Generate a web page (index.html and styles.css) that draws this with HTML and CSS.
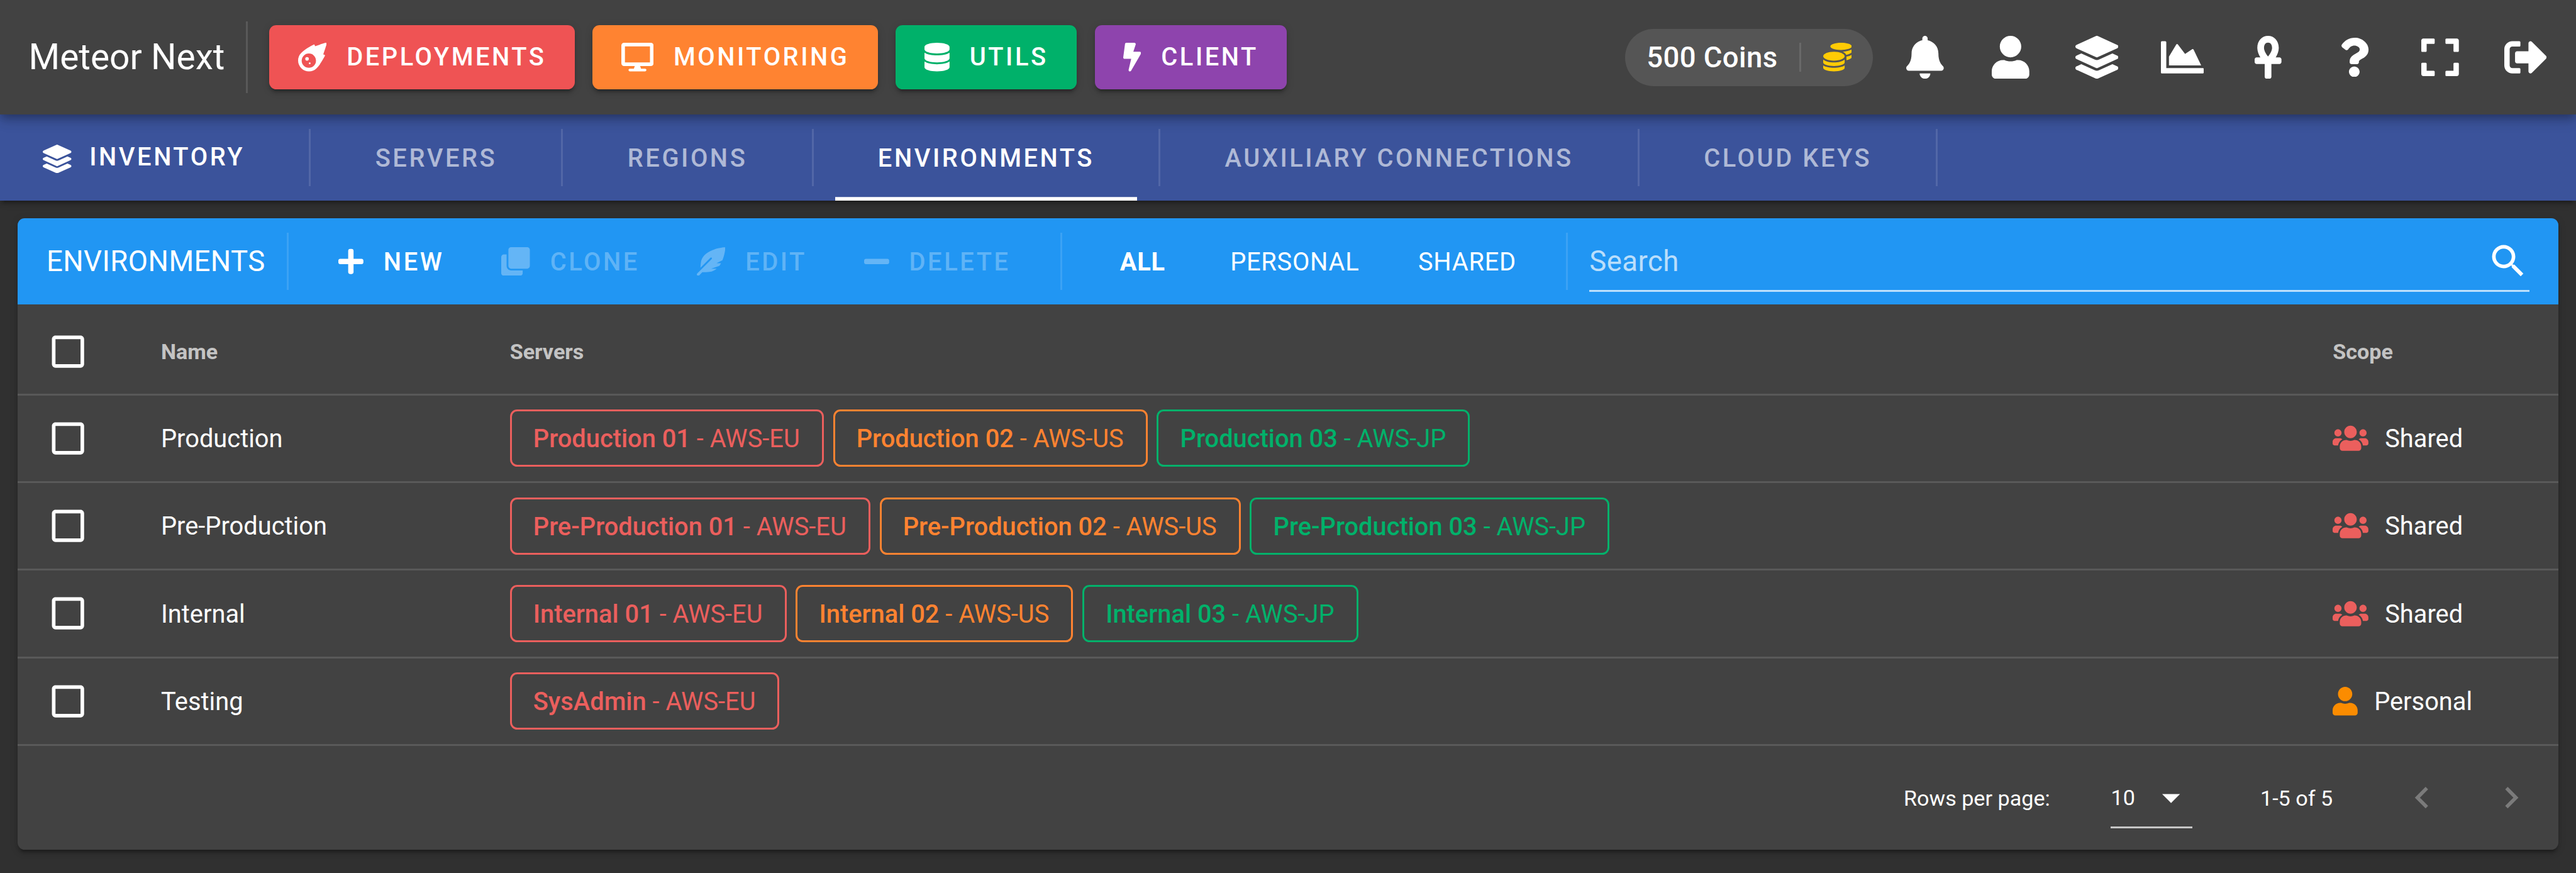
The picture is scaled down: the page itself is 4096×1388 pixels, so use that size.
FILE: index.html
```html
<!DOCTYPE html>
<html lang="en">
<head>
<meta charset="utf-8">
<title>Meteor Next</title>
<link rel="stylesheet" href="styles.css">
</head>
<body>
<svg class="sprite" aria-hidden="true">
  <defs>
    <path id="i-meteor" d="M511.328,20.8027c-11.60759,38.70264-34.30724,111.70173-61.30311,187.70077,6.99893,2.09372,13.4042,4,18.60653,5.59368a16.06158,16.06158,0,0,1,9.49854,22.906c-22.106,42.29635-82.69047,152.795-142.47819,214.40356-.99984,1.09373-1.99969,2.5-2.99954,3.49995A194.83046,194.83046,0,1,1,57.085,179.41009c.99985-1,2.40588-2,3.49947-3,61.59994-59.90549,171.97367-120.40473,214.37343-142.4982a16.058,16.058,0,0,1,22.90274,9.49988c1.59351,5.09368,3.49947,11.5936,5.5929,18.59351C379.34818,35.00565,452.43074,12.30281,491.12794.70921A16.18325,16.18325,0,0,1,511.328,20.8027ZM319.951,320.00207A127.98041,127.98041,0,1,0,191.97061,448.00046,127.97573,127.97573,0,0,0,319.951,320.00207Zm-127.98041-31.9996a31.9951,31.9951,0,1,1-31.9951-31.9996A31.959,31.959,0,0,1,191.97061,288.00247Zm31.9951,79.999a15.99755,15.99755,0,1,1-15.99755-15.9998A16.04975,16.04975,0,0,1,223.96571,368.00147Z"/>
    <path id="i-desktop" d="M528 0H48C21.5 0 0 21.5 0 48v320c0 26.5 21.5 48 48 48h192l-16 48h-72c-13.3 0-24 10.7-24 24s10.7 24 24 24h272c13.3 0 24-10.7 24-24s-10.7-24-24-24h-72l-16-48h192c26.5 0 48-21.5 48-48V48c0-26.5-21.5-48-48-48zm-16 352H64V64h448v288z"/>
    <path id="i-database" d="M448 73.143v45.714C448 159.143 347.667 192 224 192S0 159.143 0 118.857V73.143C0 32.857 100.333 0 224 0s224 32.857 224 73.143zM448 176v102.857C448 319.143 347.667 352 224 352S0 319.143 0 278.857V176c48.125 33.143 136.208 48.572 224 48.572S399.874 209.143 448 176zm0 160v102.857C448 479.143 347.667 512 224 512S0 479.143 0 438.857V336c48.125 33.143 136.208 48.572 224 48.572S399.874 369.143 448 336z"/>
    <path id="i-bolt" d="M296 160H180.6l42.6-129.8C227.2 15 215.7 0 200 0H56C44 0 33.8 8.9 32.2 20.8l-32 240C-1.7 275.2 9.5 288 24 288h118.7L96.6 482.5c-3.6 15.2 8 29.5 23.3 29.5 8.4 0 16.4-4.4 20.8-12l176-304c9.3-15.9-2.2-36-20.7-36z"/>
    <path id="i-coins" d="M0 405.3V448c0 35.3 86 64 192 64s192-28.7 192-64v-42.7C342.7 434.4 267.2 448 192 448S41.3 434.4 0 405.3zM320 128c106 0 192-28.7 192-64S426 0 320 0 128 28.7 128 64s86 64 192 64zM0 300.4V352c0 35.3 86 64 192 64s192-28.7 192-64v-51.6c-41.3 34-116.9 51.6-192 51.6S41.3 334.4 0 300.4zm416 11c57.3-11.1 96-31.7 96-55.4v-42.7c-23.2 16.4-57.3 27.6-96 34.5v63.6zM192 160C86 160 0 195.8 0 240s86 80 192 80 192-35.8 192-80-86-80-192-80zm219.3 56.3c60-10.8 100.7-32 100.7-56.3v-42.7c-35.5 25.1-96.5 38.6-160.7 41.8 29.5 14.3 51.2 33.5 60 57.2z"/>
    <path id="i-bell" d="M224 512c35.32 0 63.97-28.65 63.97-64H160.03c0 35.35 28.65 64 63.97 64zm215.39-149.71c-19.32-20.76-55.47-51.99-55.47-154.29 0-77.7-54.48-139.9-127.94-155.16V32c0-17.67-14.32-32-31.98-32s-31.98 14.33-31.98 32v20.84C118.56 68.1 64.08 130.3 64.08 208c0 102.3-36.15 133.53-55.47 154.29-6 6.45-8.66 14.16-8.61 21.71.11 16.4 12.98 32 32.1 32h383.8c19.12 0 32-15.6 32.1-32 .05-7.55-2.61-15.27-8.61-21.71z"/>
    <path id="i-user" d="M224 256c70.7 0 128-57.3 128-128S294.7 0 224 0 96 57.3 96 128s57.3 128 128 128zm89.6 32h-16.7c-22.2 10.2-46.9 16-72.9 16s-50.6-5.8-72.9-16h-16.7C60.2 288 0 348.2 0 422.4V464c0 26.5 21.5 48 48 48h352c26.5 0 48-21.5 48-48v-41.6c0-74.2-60.2-134.4-134.4-134.4z"/>
    <path id="i-layers" d="M12.41 148.02l232.94 105.67c6.8 3.09 14.49 3.09 21.29 0l232.94-105.67c16.55-7.51 16.55-32.52 0-40.03L266.65 2.31a25.607 25.607 0 0 0-21.29 0L12.41 107.98c-16.55 7.51-16.55 32.53 0 40.04zm487.18 88.28l-58.09-26.33-161.64 73.27c-7.56 3.43-15.59 5.17-23.86 5.17s-16.29-1.74-23.86-5.17L70.51 209.97l-58.1 26.33c-16.55 7.5-16.55 32.5 0 40l232.94 105.59c6.8 3.08 14.49 3.08 21.29 0L499.59 276.3c16.55-7.5 16.55-32.5 0-40zm0 127.8l-57.87-26.23-161.86 73.37c-7.56 3.43-15.59 5.17-23.86 5.17s-16.29-1.74-23.86-5.17L70.29 337.87 12.41 364.1c-16.55 7.5-16.55 32.5 0 40l232.94 105.59c6.8 3.08 14.49 3.08 21.29 0L499.59 404.1c16.55-7.5 16.55-32.5 0-40z"/>
    <path id="i-chart" d="M500 384c6.6 0 12 5.4 12 12v40c0 6.6-5.4 12-12 12H12c-6.6 0-12-5.4-12-12V76c0-6.6 5.4-12 12-12h40c6.6 0 12 5.4 12 12v308h436zM372.7 159.5L288 216l-85.3-113.7c-5.1-6.8-15.5-6.3-19.9 1L96 248v104h384l-89.9-187.8c-3.2-6.5-11.4-8.7-17.4-4.7z"/>
    <path id="i-ankh" d="M296 256h-44.62C272.46 222.01 288 181.65 288 144 288 55.63 230.69 0 160 0S32 55.63 32 144c0 37.65 15.54 78.01 36.62 112H24c-13.25 0-24 10.74-24 24v32c0 13.25 10.75 24 24 24h96v152c0 13.25 10.75 24 24 24h32c13.25 0 24-10.75 24-24V336h96c13.25 0 24-10.75 24-24v-32c0-13.26-10.75-24-24-24zM160 80c29.61 0 48 24.52 48 64 0 34.66-27.14 78.14-48 100.87-20.86-22.72-48-66.21-48-100.87 0-39.48 18.39-64 48-64z"/>
    <path id="i-question" d="M202.021 0C122.202 0 70.503 32.703 29.914 91.026c-7.363 10.58-5.093 25.086 5.178 32.874l43.138 32.709c10.373 7.865 25.132 6.026 33.253-4.148 25.049-31.381 43.63-49.449 82.757-49.449 30.764 0 68.816 19.799 68.816 49.631 0 22.552-18.617 34.134-48.993 51.164-35.423 19.86-82.299 44.576-82.299 106.405V320c0 13.255 10.745 24 24 24h72.471c13.255 0 24-10.745 24-24v-5.773c0-42.86 125.268-44.645 125.268-160.627C377.504 66.256 286.902 0 202.021 0zM192 373.459c-38.196 0-69.271 31.075-69.271 69.271 0 38.195 31.075 69.27 69.271 69.27s69.271-31.075 69.271-69.271-31.075-69.27-69.271-69.27z"/>
    <path id="i-expand" d="M0 180V56c0-13.3 10.7-24 24-24h124c6.6 0 12 5.4 12 12v40c0 6.6-5.4 12-12 12H64v84c0 6.6-5.4 12-12 12H12c-6.6 0-12-5.4-12-12zM288 44v40c0 6.6 5.4 12 12 12h84v84c0 6.6 5.4 12 12 12h40c6.6 0 12-5.4 12-12V56c0-13.3-10.7-24-24-24H300c-6.6 0-12 5.4-12 12zm148 276h-40c-6.6 0-12 5.4-12 12v84h-84c-6.6 0-12 5.4-12 12v40c0 6.6 5.4 12 12 12h124c13.3 0 24-10.7 24-24V332c0-6.6-5.4-12-12-12zM160 468v-40c0-6.6-5.4-12-12-12H64v-84c0-6.6-5.4-12-12-12H12c-6.6 0-12 5.4-12 12v124c0 13.3 10.7 24 24 24h124c6.6 0 12-5.4 12-12z"/>
    <path id="i-signout" d="M497 273L329 441c-15 15-41 4.5-41-17v-96H152c-13.3 0-24-10.7-24-24v-96c0-13.3 10.7-24 24-24h136V88c0-21.4 25.9-32 41-17l168 168c9.3 9.4 9.3 24.6 0 34zM192 436v-40c0-6.6-5.4-12-12-12H96c-17.7 0-32-14.3-32-32V160c0-17.7 14.3-32 32-32h84c6.6 0 12-5.4 12-12V76c0-6.6-5.4-12-12-12H96c-53 0-96 43-96 96v192c0 53 43 96 96 96h84c6.6 0 12-5.4 12-12z"/>
    <path id="i-plus" d="M416 208H272V64c0-17.67-14.33-32-32-32h-32c-17.67 0-32 14.33-32 32v144H32c-17.67 0-32 14.33-32 32v32c0 17.67 14.33 32 32 32h144v144c0 17.67 14.33 32 32 32h32c17.67 0 32-14.33 32-32V304h144c17.67 0 32-14.33 32-32v-32c0-17.67-14.33-32-32-32z"/>
    <path id="i-minus" d="M416 208H32c-17.67 0-32 14.33-32 32v32c0 17.67 14.33 32 32 32h384c17.67 0 32-14.33 32-32v-32c0-17.67-14.33-32-32-32z"/>
    <path id="i-clone" d="M464 0c26.51 0 48 21.49 48 48v288c0 26.51-21.49 48-48 48H176c-26.51 0-48-21.49-48-48V48c0-26.51 21.49-48 48-48h288M176 416c-44.112 0-80-35.888-80-80V128H48c-26.51 0-48 21.49-48 48v288c0 26.51 21.49 48 48 48h288c26.51 0 48-21.49 48-48v-48H176z"/>
    <path id="i-feather" d="M512 0C460.22 3.56 96.44 38.2 71.01 287.61c-3.09 26.66-4.84 53.44-5.99 80.24l178.87-178.69c6.25-6.25 16.4-6.25 22.65 0s6.25 16.38 0 22.63L7.04 471.03c-9.38 9.37-9.38 24.57 0 33.94 9.38 9.37 24.59 9.37 33.98 0l57.13-57.07c42.09-.14 84.15-2.53 125.96-7.36 53.48-5.44 97.02-26.47 132.58-56.54H255.74l146.79-48.88c11.25-14.89 21.37-30.71 30.45-47.12h-81.14l106.54-53.21C500.29 132.86 510.19 26.26 512 0z"/>
    <path id="i-users" d="M96 224c35.3 0 64-28.7 64-64s-28.7-64-64-64-64 28.7-64 64 28.7 64 64 64zm448 0c35.3 0 64-28.7 64-64s-28.7-64-64-64-64 28.7-64 64 28.7 64 64 64zm32 32h-64c-17.6 0-33.5 7.1-45.1 18.6 40.3 22.1 68.9 62 75.1 109.4h66c17.7 0 32-14.3 32-32v-32c0-35.3-28.7-64-64-64zm-256 0c61.9 0 112-50.1 112-112S381.9 32 320 32 208 82.1 208 144s50.1 112 112 112zm76.8 32h-8.3c-20.8 10-43.9 16-68.5 16s-47.6-6-68.5-16h-8.3C179.6 288 128 339.6 128 403.2V432c0 26.5 21.5 48 48 48h288c26.5 0 48-21.5 48-48v-28.8c0-63.6-51.6-115.2-115.2-115.2zm-223.7-13.4C161.5 263.1 145.6 256 128 256H64c-35.3 0-64 28.7-64 64v32c0 17.7 14.3 32 32 32h65.9c6.3-47.4 34.9-87.3 75.2-109.4z"/>
    <path id="i-search" d="M9.5,3A6.5,6.5 0 0,1 16,9.5C16,11.11 15.41,12.59 14.44,13.73L14.71,14H15.5L20.5,19L19,20.5L14,15.5V14.71L13.73,14.44C12.59,15.41 11.11,16 9.5,16A6.5,6.5 0 0,1 3,9.5A6.5,6.5 0 0,1 9.5,3M9.5,5C7,5 5,7 5,9.5C5,12 7,14 9.5,14C12,14 14,12 14,9.5C14,7 12,5 9.5,5Z"/>
    <path id="i-box" d="M19,3H5C3.89,3 3,3.89 3,5V19A2,2 0 0,0 5,21H19A2,2 0 0,0 21,19V5C21,3.89 20.1,3 19,3M19,5V19H5V5H19Z"/>
    <path id="i-left" d="M15.41,16.58L10.83,12L15.41,7.41L14,6L8,12L14,18L15.41,16.58Z"/>
    <path id="i-right" d="M8.59,16.58L13.17,12L8.59,7.41L10,6L16,12L10,18L8.59,16.58Z"/>
    <path id="i-down" d="M7,10L12,15L17,10H7Z"/>
  </defs>
</svg>

<header class="appbar">
  <div class="brand">Meteor Next</div>
  <span class="rule rule-tall"></span>
  <nav class="apps">
    <a class="btn btn-red"><svg class="icon" viewBox="0 0 512 512"><use href="#i-meteor"/></svg>DEPLOYMENTS</a>
    <a class="btn btn-orange"><svg class="icon" viewBox="0 0 576 512"><use href="#i-desktop"/></svg>MONITORING</a>
    <a class="btn btn-green"><svg class="icon" viewBox="0 0 448 512"><use href="#i-database"/></svg>UTILS</a>
    <a class="btn btn-purple"><svg class="icon" viewBox="0 0 320 512"><use href="#i-bolt"/></svg>CLIENT</a>
  </nav>
  <div class="coins"><span class="coins-text">500 Coins</span><span class="rule rule-short"></span><svg class="icon" viewBox="0 0 512 512"><use href="#i-coins"/></svg></div>
  <div class="actions">
    <a class="action"><svg class="icon" viewBox="0 0 448 512"><use href="#i-bell"/></svg></a>
    <a class="action"><svg class="icon" viewBox="0 0 448 512"><use href="#i-user"/></svg></a>
    <a class="action"><svg class="icon" viewBox="0 0 512 512"><use href="#i-layers"/></svg></a>
    <a class="action"><svg class="icon" viewBox="0 0 512 512"><use href="#i-chart"/></svg></a>
    <a class="action"><svg class="icon" viewBox="0 0 320 512"><use href="#i-ankh"/></svg></a>
    <a class="action action-help"><svg class="icon" viewBox="0 0 384 512"><use href="#i-question"/></svg></a>
    <a class="action"><svg class="icon" viewBox="0 0 448 512"><use href="#i-expand"/></svg></a>
    <a class="action"><svg class="icon" viewBox="0 0 512 512"><use href="#i-signout"/></svg></a>
  </div>
</header>

<nav class="tabs">
  <a class="tab tab-home"><svg class="icon" viewBox="0 0 512 512"><use href="#i-layers"/></svg>INVENTORY</a>
  <span class="rule"></span>
  <a class="tab">SERVERS</a>
  <span class="rule"></span>
  <a class="tab">REGIONS</a>
  <span class="rule"></span>
  <a class="tab tab-active">ENVIRONMENTS</a>
  <span class="rule"></span>
  <a class="tab">AUXILIARY CONNECTIONS</a>
  <span class="rule"></span>
  <a class="tab">CLOUD KEYS</a>
  <span class="rule"></span>
</nav>

<main class="card">
  <div class="toolbar">
    <div class="toolbar-title">ENVIRONMENTS</div>
    <span class="rule"></span>
    <a class="tool"><svg class="icon" viewBox="0 0 448 512"><use href="#i-plus"/></svg>NEW</a>
    <a class="tool tool-off"><svg class="icon" viewBox="0 0 512 512"><use href="#i-clone"/></svg>CLONE</a>
    <a class="tool tool-off"><svg class="icon" viewBox="0 0 512 512"><use href="#i-feather"/></svg>EDIT</a>
    <a class="tool tool-off"><svg class="icon" viewBox="0 0 448 512"><use href="#i-minus"/></svg>DELETE</a>
    <span class="rule"></span>
    <a class="filter filter-active">ALL</a>
    <a class="filter">PERSONAL</a>
    <a class="filter filter-last">SHARED</a>
    <span class="rule"></span>
    <div class="search"><span class="search-hint">Search</span><svg class="mdi" viewBox="0 0 24 24"><use href="#i-search"/></svg></div>
  </div>

  <table class="grid">
    <colgroup><col class="col-check"><col class="col-name"><col><col class="col-scope"></colgroup>
    <thead>
      <tr>
        <th><svg class="mdi" viewBox="0 0 24 24"><use href="#i-box"/></svg></th>
        <th class="label">Name</th>
        <th class="label">Servers</th>
        <th class="label">Scope</th>
      </tr>
    </thead>
    <tbody>
      <tr>
        <td><svg class="mdi" viewBox="0 0 24 24"><use href="#i-box"/></svg></td>
        <td class="name">Production</td>
        <td><div class="chips"><span class="chip red"><b>Production 01</b> - AWS-EU</span><span class="chip orange"><b>Production 02</b> - AWS-US</span><span class="chip green"><b>Production 03</b> - AWS-JP</span></div></td>
        <td><div class="scope"><svg class="icon shared" viewBox="0 0 640 512"><use href="#i-users"/></svg>Shared</div></td>
      </tr>
      <tr>
        <td><svg class="mdi" viewBox="0 0 24 24"><use href="#i-box"/></svg></td>
        <td class="name">Pre-Production</td>
        <td><div class="chips"><span class="chip red"><b>Pre-Production 01</b> - AWS-EU</span><span class="chip orange"><b>Pre-Production 02</b> - AWS-US</span><span class="chip green"><b>Pre-Production 03</b> - AWS-JP</span></div></td>
        <td><div class="scope"><svg class="icon shared" viewBox="0 0 640 512"><use href="#i-users"/></svg>Shared</div></td>
      </tr>
      <tr>
        <td><svg class="mdi" viewBox="0 0 24 24"><use href="#i-box"/></svg></td>
        <td class="name">Internal</td>
        <td><div class="chips"><span class="chip red"><b>Internal 01</b> - AWS-EU</span><span class="chip orange"><b>Internal 02</b> - AWS-US</span><span class="chip green"><b>Internal 03</b> - AWS-JP</span></div></td>
        <td><div class="scope"><svg class="icon shared" viewBox="0 0 640 512"><use href="#i-users"/></svg>Shared</div></td>
      </tr>
      <tr>
        <td><svg class="mdi" viewBox="0 0 24 24"><use href="#i-box"/></svg></td>
        <td class="name">Testing</td>
        <td><div class="chips"><span class="chip red"><b>SysAdmin</b> - AWS-EU</span></div></td>
        <td><div class="scope"><svg class="icon personal" viewBox="0 0 448 512"><use href="#i-user"/></svg>Personal</div></td>
      </tr>
    </tbody>
  </table>

  <footer class="pager">
    <span class="pager-text">Rows per page:</span>
    <div class="select"><span>10</span><svg class="mdi" viewBox="0 0 24 24"><use href="#i-down"/></svg></div>
    <span class="pager-text range">1-5 of 5</span>
    <a class="page"><svg class="mdi" viewBox="0 0 24 24"><use href="#i-left"/></svg></a>
    <a class="page"><svg class="mdi" viewBox="0 0 24 24"><use href="#i-right"/></svg></a>
  </footer>
</main>
</body>
</html>
```
FILE: styles.css
```css
/* The layout is 1440 units wide; 1rem is ten of them. */
html {
  font-size: calc(100vw / 144);
}

*,
*::before,
*::after {
  box-sizing: border-box;
}

body {
  margin: 0;
  height: 100vh;
  overflow: hidden;
  background: #303030;
  color: #fff;
  font-family: Roboto, "Liberation Sans", sans-serif;
  font-size: 1.4rem;
  line-height: 1.5;
}

.sprite {
  display: none;
}

.icon {
  flex: none;
  display: block;
  height: 1.6rem;
  fill: currentColor;
}

.mdi {
  flex: none;
  display: block;
  width: 2.4rem;
  height: 2.4rem;
  fill: currentColor;
}

.rule {
  flex: none;
  width: 3px;
  height: 3.2rem;
  margin: 0 1.195rem;
  background: rgba(255, 255, 255, 0.12);
}

/* Top bar */
.appbar {
  position: relative;
  z-index: 2;
  display: flex;
  align-items: center;
  height: 6.4rem;
  padding: 0 0.4rem 0 1.6rem;
  background: #424242;
  box-shadow: 0 0.2rem 0.4rem -0.1rem rgba(0, 0, 0, 0.2), 0 0.4rem 0.5rem rgba(0, 0, 0, 0.14), 0 0.1rem 1rem rgba(0, 0, 0, 0.12);
}

.brand {
  font-size: 2rem;
}

.rule-tall {
  height: 4rem;
}

.apps {
  display: flex;
  gap: 1rem;
}

.btn {
  display: flex;
  align-items: center;
  gap: 1.12rem;
  height: 3.6rem;
  padding: 0 1.6rem;
  border-radius: 0.4rem;
  font-weight: 500;
  letter-spacing: 0.0892857em;
  box-shadow: 0 0.3rem 0.1rem -0.2rem rgba(0, 0, 0, 0.2), 0 0.2rem 0.2rem rgba(0, 0, 0, 0.14), 0 0.1rem 0.5rem rgba(0, 0, 0, 0.12);
}

.btn-red { background: #ef5354; }
.btn-orange { background: #ff8331; }
.btn-green { background: #00b16a; }
.btn-purple { background: #8e44ad; }

.coins {
  display: flex;
  align-items: center;
  height: 3.2rem;
  margin-left: auto;
  padding: 0 1.2rem;
  border-radius: 1.6rem;
  background: #555;
  font-size: 1.6rem;
  font-weight: 500;
}

.coins-text {
  padding-top: 0.06rem;
  letter-spacing: 0.009375em;
}

.coins .icon {
  color: #ffcb05;
}

.rule-short {
  height: 1.6rem;
  margin: 0 1.21rem;
}

.actions {
  display: flex;
  margin-left: 0.5rem;
}

.action {
  display: flex;
  align-items: center;
  justify-content: center;
  width: 4.8rem;
  height: 4.8rem;
}

.action .icon {
  height: 2.4rem;
}

.action-help .icon {
  height: 2.2rem;
}

/* Section tabs */
.tabs {
  position: relative;
  z-index: 1;
  display: flex;
  align-items: center;
  height: 4.8rem;
  background: #3b539b;
  box-shadow: 0 0.3rem 0.1rem -0.2rem rgba(0, 0, 0, 0.2), 0 0.2rem 0.2rem rgba(0, 0, 0, 0.14), 0 0.1rem 0.5rem rgba(0, 0, 0, 0.12);
}

.tab {
  display: flex;
  align-items: center;
  height: 100%;
  padding: 0.08rem 2.4rem 0;
  color: rgba(255, 255, 255, 0.6);
  font-weight: 500;
  letter-spacing: 0.0892857em;
}

.tab-home {
  gap: 1rem;
  padding-top: 0;
  color: #fff;
}

.tab-home .icon {
  margin-top: 0.14rem;
}

.tab-active {
  color: #fff;
  box-shadow: inset 0 -0.2rem #fff;
}

/* Environments card */
.card {
  height: 35.3rem;
  margin: 1rem;
  border-radius: 0.4rem;
  background: #424242;
  box-shadow: 0 0.3rem 0.1rem -0.2rem rgba(0, 0, 0, 0.2), 0 0.2rem 0.2rem rgba(0, 0, 0, 0.14), 0 0.1rem 0.5rem rgba(0, 0, 0, 0.12);
}

.toolbar {
  display: flex;
  align-items: center;
  height: 4.8rem;
  padding: 0 1.6rem;
  border-radius: 0.4rem 0.4rem 0 0;
  background: #2196f3;
}

.toolbar-title {
  padding-top: 0.08rem;
  font-size: 1.6rem;
  letter-spacing: 0.009375em;
}

.tool {
  display: flex;
  align-items: center;
  gap: 1.12rem;
  padding: 0.08rem 1.6rem 0;
  font-weight: 500;
  letter-spacing: 0.0892857em;
}

.tool .icon {
  margin-bottom: 0.08rem;
}

.tool-off {
  color: rgba(255, 255, 255, 0.3);
}

.filter {
  padding: 0.08rem 1.6rem 0;
  letter-spacing: 0.0178571em;
  text-align: center;
}

.filter-active {
  min-width: 6.6rem;
  font-weight: 700;
}

.filter-last {
  margin-left: 0.09rem;
}

.search {
  display: flex;
  flex: 1;
  align-items: center;
  justify-content: space-between;
  height: 3.3rem;
  margin-top: 0.1rem;
  border-bottom: 3px solid rgba(255, 255, 255, 0.7);
  font-size: 1.6rem;
}

.search-hint {
  padding-top: 0.08rem;
  color: rgba(255, 255, 255, 0.7);
  letter-spacing: 0.009375em;
}

/* Table */
.grid {
  width: 100%;
  border-collapse: separate;
  border-spacing: 0;
  table-layout: fixed;
}

.col-check { width: 6.4rem; }
.col-name { width: 19.5rem; }
.col-scope { width: 14.2rem; }

.grid th,
.grid td {
  height: 4.9rem;
  padding: 0 1.6rem;
  border-bottom: 3px solid #595959;
  text-align: left;
  vertical-align: middle;
}

.grid th {
  height: 5.1rem;
  padding-top: 0.3rem;
  color: rgba(255, 255, 255, 0.7);
  font-size: 1.2rem;
  font-weight: 700;
}

.grid .label {
  padding-top: 0.36rem;
}

.grid .name {
  padding-top: 0.08rem;
}

.grid .mdi {
  color: #fff;
}

.chips {
  display: flex;
  gap: 0.52rem;
}

.chip {
  height: 3.2rem;
  padding: 0 1.23rem 0 1.2rem;
  border: 3px solid currentColor;
  border-radius: 0.4rem;
  line-height: 3.06rem;
  white-space: pre;
}

.chip b {
  font-weight: 500;
}

.red, .shared { color: #eb5f5d; }
.orange { color: #ff8331; }
.green { color: #00b16a; }
.personal { color: #fb8c00; }

.scope {
  display: flex;
  align-items: center;
  gap: 0.92rem;
  padding-top: 0.08rem;
}

.scope .icon {
  margin-bottom: 0.08rem;
}

/* Pager */
.pager {
  display: flex;
  align-items: center;
  justify-content: flex-end;
  height: 5.8rem;
  padding-right: 1.4rem;
  font-size: 1.2rem;
}

.pager-text {
  padding-top: 0.1rem;
}

.select {
  display: flex;
  align-items: center;
  justify-content: space-between;
  width: 4.55rem;
  height: 3.4rem;
  margin: 0 3.8rem 0 3.4rem;
  padding-top: 0.1rem;
  border-bottom: 3px solid rgba(255, 255, 255, 0.7);
}

.range {
  margin-right: 3.8rem;
}

.page {
  color: rgba(255, 255, 255, 0.3);
}

.page + .page {
  margin-left: 2.6rem;
}
```
